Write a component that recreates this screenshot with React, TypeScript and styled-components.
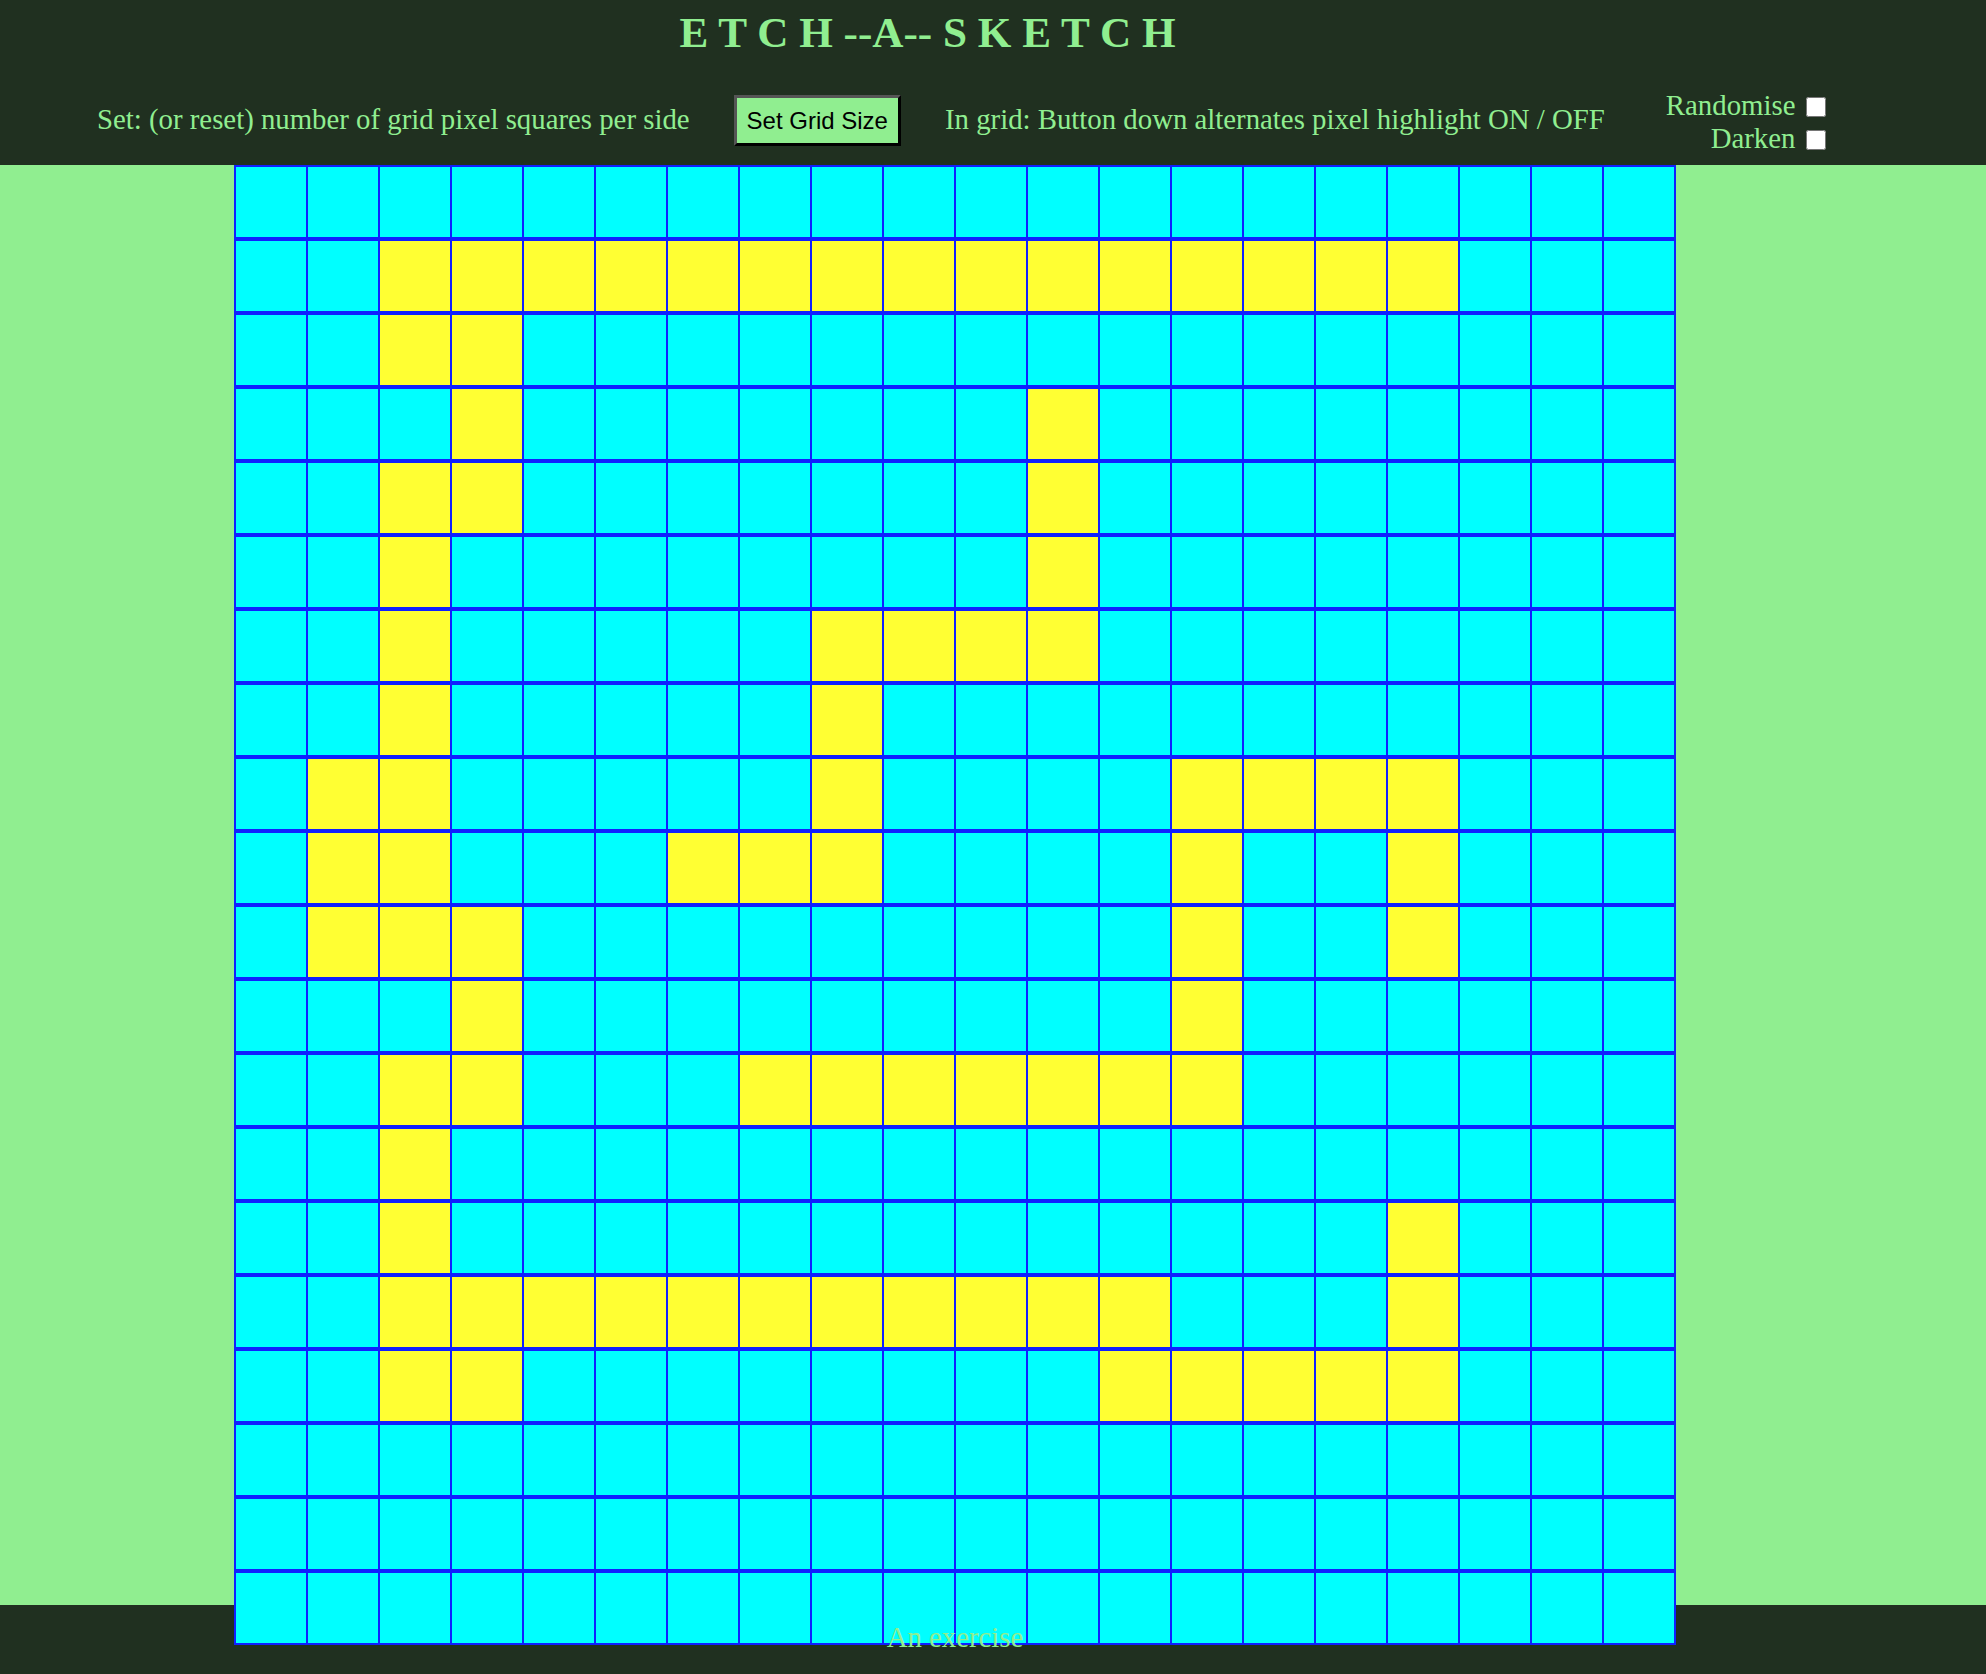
import React, { useState } from "react";
import styled, { createGlobalStyle } from "styled-components";

const GlobalStyle = createGlobalStyle`
  html, body {
    margin: 0;
    padding: 0;
    background: #203020;
  }
  body {
    font-family: "Liberation Serif", "Times New Roman", serif;
    font-size: 28.8px;
    color: #90ee90;
  }
  * { box-sizing: content-box; }
`;

const Header = styled.header`
  height: 157px;
  padding-top: 8px;
  background: #203020;
`;

const Title = styled.h1`
  margin: 0;
  padding-right: 131px;
  font-size: 43.2px;
  line-height: 50px;
  font-weight: bold;
  text-align: center;
  color: #90ee90;
  white-space: pre;
`;

const Controls = styled.div`
  display: flex;
  align-items: baseline;
  height: 52px;
  margin-top: 37px;
  padding-left: 97px;
  gap: 44px;
`;

const Hint = styled.span`
  line-height: 33px;
  white-space: nowrap;
`;

const SizeButton = styled.button`
  font-family: "Liberation Sans", Arial, sans-serif;
  font-size: 24px;
  line-height: 27.6px;
  color: #000;
  background: #90ee90;
  border-width: 3px;
  border-style: solid;
  border-color: #555 #000 #000 #555;
  padding: 9px 10px 8px;
  margin: 0;
  cursor: pointer;
`;

const Options = styled.div`
  align-self: center;
  margin-left: 17px;
  margin-top: 2px;
  display: flex;
  flex-direction: column;
  align-items: flex-end;
`;

const OptionLabel = styled.label`
  display: flex;
  align-items: center;
  gap: 11px;
  line-height: 33px;
`;

const Check = styled.input`
  width: 20px;
  height: 20px;
  margin: 3px 0 0 0;
`;

const Main = styled.main`
  height: 1440px;
  background: #90ee90;
  display: flex;
  justify-content: center;
  padding-right: 76px;
`;

const Grid = styled.div`
  display: flex;
  flex-direction: column;
  flex-shrink: 0;
  align-self: flex-start;
`;

const Row = styled.div`
  display: flex;
  border: 1px solid #1020ff;
`;

const Cell = styled.div<{ $on: boolean }>`
  width: 70px;
  height: 70px;
  border: 1px solid #1020ff;
  background: ${(p) => (p.$on ? "#ffff33" : "#00ffff")};
  cursor: pointer;
`;

const Footer = styled.footer`
  height: 53px;
  padding-top: 16px;
  padding-right: 76px;
  background: #203020;
  text-align: center;
  line-height: 33px;
  color: #90ee90;
`;

const ON: Record<number, number[]> = {
  1: [2, 3, 4, 5, 6, 7, 8, 9, 10, 11, 12, 13, 14, 15, 16],
  2: [2, 3],
  3: [3, 11],
  4: [2, 3, 11],
  5: [2, 11],
  6: [2, 8, 9, 10, 11],
  7: [2, 8],
  8: [1, 2, 8, 13, 14, 15, 16],
  9: [1, 2, 6, 7, 8, 13, 16],
  10: [1, 2, 3, 13, 16],
  11: [3, 13],
  12: [2, 3, 7, 8, 9, 10, 11, 12, 13],
  13: [2],
  14: [2, 16],
  15: [2, 3, 4, 5, 6, 7, 8, 9, 10, 11, 12, 16],
  16: [2, 3, 12, 13, 14, 15, 16],
};

const SIZE = 20;

const initial = (): boolean[][] =>
  Array.from({ length: SIZE }, (_, r) =>
    Array.from({ length: SIZE }, (_, c) => (ON[r] || []).includes(c))
  );

export default function App() {
  const [cells, setCells] = useState<boolean[][]>(initial);

  const toggle = (r: number, c: number) => {
    setCells((prev) =>
      prev.map((row, ri) => (ri === r ? row.map((v, ci) => (ci === c ? !v : v)) : row))
    );
  };

  return (
    <>
      <GlobalStyle />
      <Header>
        <Title>E T C H --A-- S K E T C H</Title>
        <Controls>
          <Hint>Set: (or reset) number of grid pixel squares per side</Hint>
          <SizeButton type="button" onClick={() => setCells(initial())}>
            Set Grid Size
          </SizeButton>
          <Hint>In grid: Button down alternates pixel highlight ON / OFF</Hint>
          <Options>
            <OptionLabel>
              Randomise
              <Check type="checkbox" />
            </OptionLabel>
            <OptionLabel>
              Darken
              <Check type="checkbox" />
            </OptionLabel>
          </Options>
        </Controls>
      </Header>
      <Main>
        <Grid>
          {cells.map((row, r) => (
            <Row key={r}>
              {row.map((on, c) => (
                <Cell key={c} $on={on} onMouseDown={() => toggle(r, c)} />
              ))}
            </Row>
          ))}
        </Grid>
      </Main>
      <Footer>An exercise</Footer>
    </>
  );
}
